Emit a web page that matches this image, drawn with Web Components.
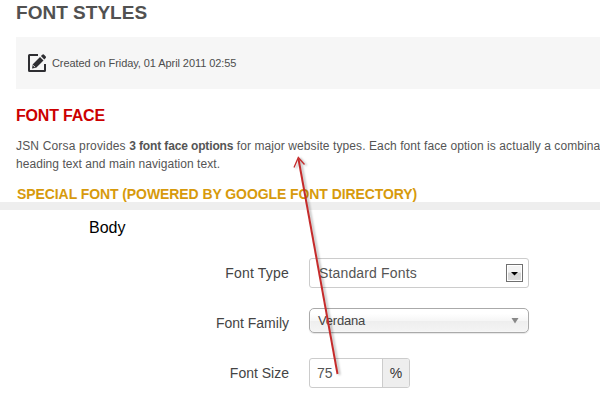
<!DOCTYPE html>
<html lang="en"><head><meta charset="utf-8"><title>Font styles</title>
<style>
html,body{margin:0;width:600px;height:400px;overflow:hidden;background:#fff;font-family:"Liberation Sans",Arial,sans-serif}
</style></head><body>
<font-styles-page></font-styles-page>
<script>
function define(name, html){
  const t=document.createElement('template');t.innerHTML=html;
  customElements.define(name,class extends HTMLElement{
    constructor(){super();this.attachShadow({mode:'open'}).append(t.content.cloneNode(true));}
  });
}
define('article-meta',`<style>
:host{display:flex;align-items:center;box-sizing:border-box;height:52px;margin-left:16px;padding-left:11px;gap:5px;background:#f6f6f6;color:#4d4d4d;font-size:11px;letter-spacing:-.08px;white-space:nowrap}
svg{display:block;width:20px;height:20px}
</style><svg viewBox="0 0 20 20"><path d="M11 2H2.500Q2 2 2 2.500V17.500Q2 18 2.500 18H17.500Q18 18 18 17.500V11" fill="none" stroke="#2e2e32" stroke-width="2"/><path d="M5 15.500L5.800 11.200L13 4L16.500 7.500L9.200 14.700Z M13.900 3.100L15.300 1.700Q16 1 16.800 1.600L18.800 3.600Q19.300 4.300 18.700 5L17.300 6.600Z" fill="#2e2e32"/><path d="M6.200 12.400L8.200 14.300" stroke="#f6f6f6" stroke-width=".9"/></svg><span><slot></slot></span>`);
define('article-body',`<style>
:host{display:block;box-sizing:border-box;height:202px;overflow:hidden;color:#555;white-space:nowrap}
h1,h2,h3,p{margin:0 0 0 16px}
h1{font-size:19px;line-height:26px;height:37px;color:#515151;letter-spacing:.02px}
h2{font-size:16px;line-height:20px;color:#c00;margin-top:17px;letter-spacing:-.2px}
p{font-size:12px;line-height:18px;margin-top:11px;width:700px}
h3{font-size:14px;line-height:18px;margin:12px 0 0 17px;color:#d79a0c;letter-spacing:-.08px}
p span{display:block}
#a{letter-spacing:.09px}
#a i{font-style:normal;letter-spacing:.17px}
#b{letter-spacing:.05px}
b{letter-spacing:-.14px}
</style><h1>FONT STYLES</h1><article-meta>Created on Friday, 01 April 2011 02:55</article-meta>
<h2>FONT FACE</h2><p><span id="a"><i>JSN Corsa provides </i><b>3 font face options</b> for major website types. Each font face option is actually a combina</span><span id="b">heading text and main navigation text.</span></p>
<h3>SPECIAL FONT (POWERED BY GOOGLE FONT DIRECTORY)</h3>`);
define('form-row',`<style>
:host{display:flex;height:50px;align-items:flex-start}
.l{width:289px;margin-right:20px;text-align:right;font-size:14px;line-height:30px;color:#444}
</style><span class="l"><slot name="label"></slot></span><slot></slot>`);
define('native-select',`<style>
:host{display:flex;box-sizing:border-box;width:220px;height:30px;border:1px solid #ccc;border-radius:3px;padding:0 5px 0 9px;align-items:center;justify-content:space-between;color:#555;font-size:14px;background:#fff;letter-spacing:.15px}
.b{box-sizing:border-box;width:17px;height:18px;border:1px solid #707070;background:linear-gradient(#f3f3f3 45%,#d5d5d5 50%,#ddd);box-shadow:inset 0 0 0 1px #fff}
svg{display:block}
</style><slot></slot><span class="b"><svg width="15" height="16" viewBox="0 0 15 16"><path d="M4 7H11L7.500 10.500Z" fill="#000"/></svg></span>`);
define('styled-select',`<style>
:host{display:flex;box-sizing:border-box;width:220px;height:25px;border:1px solid #aaa;border-radius:5px;padding:0 9px 0 8px;align-items:center;justify-content:space-between;color:#444;font-size:13px;letter-spacing:-.2px;background:linear-gradient(#fff 20%,#f6f6f6 50%,#eee 52%,#f4f4f4);box-shadow:inset 0 0 2px #fff,0 1px 1px rgba(0,0,0,.1)}
svg{display:block}
</style><slot></slot><svg width="8" height="7"><path d="M.500 1H7.500L4 6.500Z" fill="#888"/></svg>`);
define('unit-input',`<style>
:host{display:flex;box-sizing:border-box;width:101px;height:30px;border:1px solid #ccc;border-radius:3px;overflow:hidden;font-size:14px;line-height:28px;color:#555}
.v{width:65px;padding-left:7px}.u{flex:1;border-left:1px solid #ccc;background:#eee;text-align:center;color:#333}
</style><span class="v"><slot></slot></span><span class="u"><slot name="unit"></slot></span>`);
define('pointer-arrow',`<style>
:host{position:absolute;left:0;top:0;pointer-events:none}svg{display:block;filter:drop-shadow(2px 1px 1px rgba(0,0,0,.28))}
</style><svg width="600" height="400" fill="none" stroke="#c52b2b"><path d="M337.500 374L298.500 159" stroke-width="2"/><path d="M294 167.500L298.300 157.500L304.500 164.500" stroke-width="1.300"/></svg>`);
define('font-styles-page',`<style>
:host{display:block;position:relative;width:600px;height:400px;overflow:hidden}
.rule{height:8px;background:#eee}
.form{background:#fff}
h4{margin:0;padding:8px 0 0 89px;height:40px;font-weight:400;font-size:16px;line-height:19px;color:#000}
</style><article-body></article-body><div class="rule"></div><div class="form"><h4>Body</h4>
<form-row><span slot="label" style="letter-spacing:.2px">Font Type</span><native-select>Standard Fonts</native-select></form-row>
<form-row><span slot="label">Font Family</span><styled-select>Verdana</styled-select></form-row>
<form-row><span slot="label">Font Size</span><unit-input>75<span slot="unit">%</span></unit-input></form-row></div><pointer-arrow></pointer-arrow>`);
</script></body></html>
